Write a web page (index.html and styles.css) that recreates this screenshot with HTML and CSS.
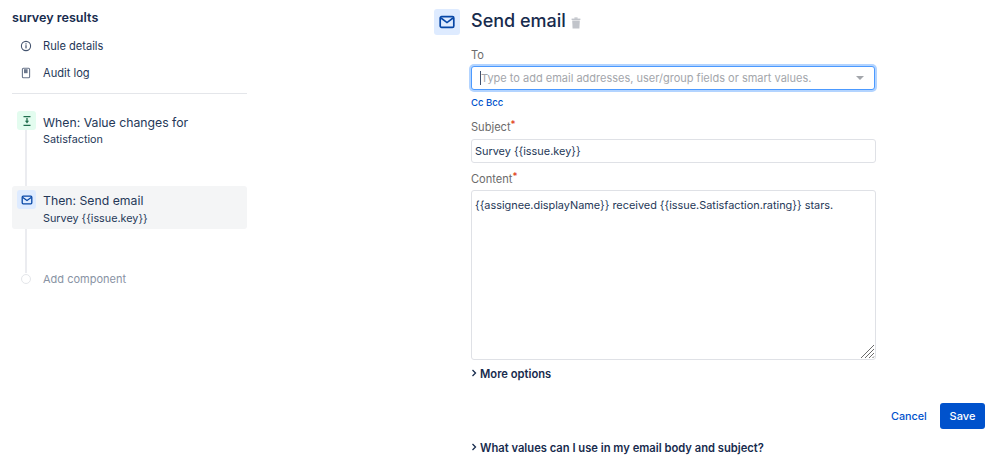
FILE: index.html
```html
<!DOCTYPE html>
<html lang="en">
<head>
<meta charset="utf-8">
<title>survey results</title>
<link rel="stylesheet" href="styles.css">
</head>
<body>
<div class="page">
  <aside class="side">
    <h2 class="rule-name">survey results</h2>
    <a class="nav-item">
      <svg class="nav-icon" viewBox="0 0 12 12"><circle cx="6" cy="6" r="4.6" fill="none" stroke="#44546f" stroke-width="1.1"/><rect x="5.4" y="5.2" width="1.2" height="3.2" fill="#44546f"/><rect x="5.4" y="3.3" width="1.2" height="1.2" fill="#44546f"/></svg>
      <span>Rule details</span>
    </a>
    <a class="nav-item nav-item-second">
      <svg class="nav-icon" viewBox="0 0 12 12"><rect x="2.4" y="1.3" width="7.2" height="9.4" rx="1" fill="none" stroke="#6b778c" stroke-width="1.1"/><rect x="4" y="2.2" width="3.6" height="4" fill="#6b778c"/></svg>
      <span>Audit log</span>
    </a>
    <hr class="divider">
    <div class="steps">
      <div class="step step-when">
        <div class="step-icon icon-green">
          <svg viewBox="0 0 12 12" width="12" height="12"><path d="M2.500 1.600h7M2.500 10.400h7" stroke="#216e4e" stroke-width="1.2"/><path d="M6 3v3.500" stroke="#216e4e" stroke-width="1.3"/><path d="M3.900 5.800h4.200L6 8.600z" fill="#216e4e"/></svg>
        </div>
        <div class="step-text">
          <div class="step-title">When: Value changes for</div>
          <div class="step-sub">Satisfaction</div>
        </div>
      </div>
      <div class="step step-then">
        <div class="step-icon icon-blue">
          <svg viewBox="0 0 12 12" width="12" height="12"><rect x="1.200" y="2.200" width="9.600" height="7.600" rx="1" fill="none" stroke="#0747a6" stroke-width="1.300"/><path d="M1.800 3.400 6 6.600l4.200-3.200" fill="none" stroke="#0747a6" stroke-width="1.200"/></svg>
        </div>
        <div class="step-text">
          <div class="step-title">Then: Send email</div>
          <div class="step-sub">Survey {{issue.key}}</div>
        </div>
      </div>
      <div class="step step-add">
        <div class="add-dot"></div>
        <div class="add-label">Add component</div>
      </div>
    </div>
  </aside>

  <main class="main">
    <div class="head-icon">
      <svg viewBox="0 0 16 16" width="16" height="16"><rect x="1.200" y="2.600" width="13.600" height="10.800" rx="1.400" fill="none" stroke="#0747a6" stroke-width="1.700"/><path d="M2 4l6 4.600L14 4" fill="none" stroke="#0747a6" stroke-width="1.600"/></svg>
    </div>
    <div class="form">
      <div class="form-title">
        <h1>Send email</h1>
        <svg class="trash" viewBox="0 0 10 12" width="10" height="12"><rect x="0.600" y="1.600" width="8.800" height="1.400" fill="#c1c4ca"/><rect x="3.400" y="0.400" width="3.200" height="1.400" fill="#c1c4ca"/><path d="M1.200 3.600h7.600l-.4 8H1.600z" fill="#c1c4ca"/></svg>
      </div>
      <label class="label label-to">To</label>
      <div class="select">
        <span class="caret"></span>
        <span class="placeholder">Type to add email addresses, user/group fields or smart values.</span>
        <span class="arrow"></span>
      </div>
      <a class="cc">Cc Bcc</a>
      <label class="label label-subject">Subject<span class="req">*</span></label>
      <div class="input">Survey {{issue.key}}</div>
      <label class="label label-content">Content<span class="req">*</span></label>
      <div class="textarea">
        {{assignee.displayName}} received {{issue.Satisfaction.rating}} stars.
        <svg class="grip" viewBox="0 0 15 15" width="15" height="15"><path d="M1 14 14 1M5 14 14 5M9 14l5-5M12.500 14l1.500-1.500" stroke="#6b6b6b" stroke-width="1" fill="none"/></svg>
      </div>
      <div class="expander expander-more">
        <svg class="chev" viewBox="0 0 6 8" width="6" height="8"><path d="M1.500 1 4.500 4 1.500 7" fill="none" stroke="#172b4d" stroke-width="1.300"/></svg>
        <span>More options</span>
      </div>
      <div class="actions-spacer"></div>
      <div class="expander expander-help">
        <svg class="chev" viewBox="0 0 6 8" width="6" height="8"><path d="M1.500 1 4.500 4 1.500 7" fill="none" stroke="#172b4d" stroke-width="1.300"/></svg>
        <span>What values can I use in my email body and subject?</span>
      </div>
    </div>
    <div class="actions">
      <a class="btn-cancel">Cancel</a>
      <a class="btn-save">Save</a>
    </div>
  </main>
</div>
</body>
</html>
```
FILE: styles.css
```css
* { box-sizing: border-box; }
html, body { margin: 0; padding: 0; background: #fff; }
body {
  width: 998px;
  height: 473px;
  overflow: hidden;
  font-family: Inter, "Liberation Sans", sans-serif;
  color: #172b4d;
  font-size: 12px;
}
.page { display: flex; height: 473px; }

/* Sidebar */
.side { width: 235px; margin-left: 12px; padding-top: 9px; flex: none; }
.rule-name { margin: 0 0 10px; font-size: 12.600px; line-height: 18px; font-weight: 600; color: #172b4d; }
.nav-item { display: flex; align-items: center; height: 18px; padding-left: 8px; font-size: 11.100px; color: #253858; }
.nav-item-second { margin-top: 9px; }
.nav-icon { width: 12px; height: 12px; margin-right: 11px; flex: none; }
.divider { border: 0; height: 1px; background: #e4e6ea; margin: 11px 0 0; }

.steps { position: relative; margin-top: 14px; }
.steps::before {
  content: "";
  position: absolute;
  left: 13px; top: 20px;
  width: 2px; height: 145px;
  background: #ebecf0;
}
.step { position: relative; display: flex; }
.step-when { height: 43px; }
.step-then { margin-top: 35px; height: 43px; background: #f4f5f6; border-radius: 3px; padding-top: 4px; }
.step-add { margin-top: 41px; height: 18px; align-items: center; }
.step-icon {
  width: 19px; height: 19px; margin-left: 5px; margin-right: 5px;
  border-radius: 3px; display: flex; align-items: center; justify-content: center; flex: none;
}
.step-when .step-icon { margin-top: 3px; }
.icon-green { background: #e3fcef; }
.icon-blue { background: #deebff; }
.step-text { margin-left: 2px; }
.step-title { font-size: 12.250px; line-height: 20px; color: #253858; }
.step-sub { font-size: 10.800px; line-height: 15px; color: #253858; }
.step-when .step-text { padding-top: 5px; }
.step-when .step-sub { margin-top: -1px; }
.step-then .step-text { padding-top: 1px; }
.add-dot { width: 10px; height: 10px; margin-left: 9px; margin-right: 12px; border-radius: 50%; background: #fff; border: 1px solid #e4e6ea; flex: none; }
.add-label { font-size: 11px; color: #8993a4; }

/* Main */
.main { position: relative; flex: 1; margin-left: 187px; display: flex; }
.head-icon {
  width: 26px; height: 26px; margin-top: 9px; background: #deebff; border-radius: 3px;
  display: flex; align-items: center; justify-content: center; flex: none;
}
.form { width: 405px; margin-left: 11px; padding-top: 8px; }
.form-title { display: flex; align-items: center; height: 26px; }
.form-title h1 { margin: 0; font-size: 18px; line-height: 26px; font-weight: 500; color: #172b4d; }
.trash { margin-left: 5px; margin-top: 3px; }
.label { display: block; font-size: 11.100px; line-height: 16px; color: #6b6b6b; }
.label-to { margin-top: 13px; }
.label-subject { margin-top: 9px; }
.label-content { margin-top: 8px; }
.req { color: #de350b; font-size: 10px; vertical-align: 3px; line-height: 0; }
.select {
  display: flex; align-items: center; height: 24px; margin-top: 3px; padding-left: 8px; padding-right: 10px;
  border: 1px solid #4c9aff; border-radius: 3px; box-shadow: 0 0 0 2px #b3d4ff;
  font-size: 11px; color: #a3a6ab; background: #fff; width: 404px;
}
.caret { width: 1px; height: 14px; background: #42526e; flex: none; }
.placeholder { flex: 1; white-space: nowrap; }
.arrow { width: 0; height: 0; border-left: 4px solid transparent; border-right: 4px solid transparent; border-top: 4px solid #a3a6ab; flex: none; }
.cc { display: block; margin-top: 6px; font-size: 9.500px; line-height: 14px; font-weight: 500; color: #0052cc; }
.input {
  height: 24px; margin-top: 4px; padding-left: 3px; border: 1px solid #dfe1e6; border-radius: 3px;
  font-size: 10.900px; line-height: 22px; color: #253858; width: 405px;
}
.textarea {
  position: relative; height: 170px; margin-top: 3px; padding: 7px 3px; border: 1px solid #dfe1e6; border-radius: 3px;
  font-size: 10.900px; line-height: 14px; color: #253858; width: 405px;
}
.grip { position: absolute; right: 0; bottom: 0; }
.expander { display: flex; align-items: center; font-size: 11.200px; font-weight: 600; line-height: 16px; color: #172b4d; }
.chev { margin-right: 3px; margin-top: -3px; flex: none; }
.expander-more { margin-top: 6px; }
.actions-spacer { height: 58px; }
.actions {
  position: absolute; left: 457px; top: 403px; width: 94px;
  display: flex; align-items: center; justify-content: space-between;
}
.btn-cancel { font-size: 10.800px; font-weight: 500; color: #0052cc; }
.btn-save {
  width: 45px; height: 26px; background: #0052cc; border-radius: 3px; color: #fff;
  font-size: 11px; font-weight: 500; display: flex; align-items: center; justify-content: center;
}
```
